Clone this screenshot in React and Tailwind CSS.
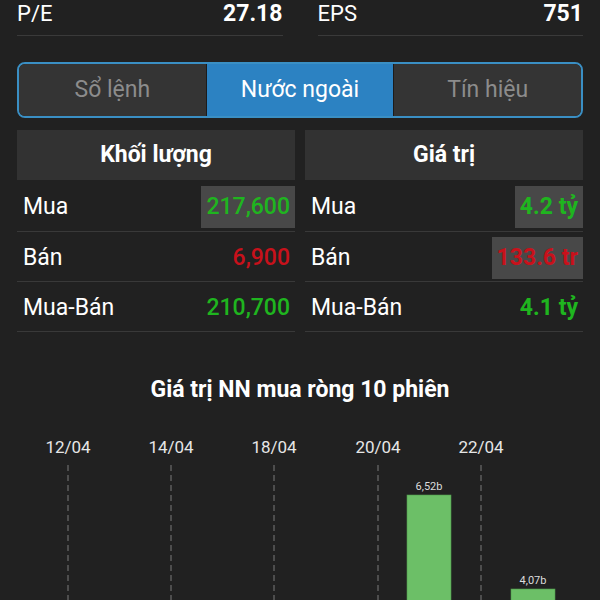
import React from "react";

const rows = [
  { label: "Mua", left: "217,600", lc: "text-[#1fb51f]", lbox: true, right: "4.2 tỷ", rc: "text-[#1fb51f]", rbox: true },
  { label: "Bán", left: "6,900", lc: "text-[#c8111b]", lbox: false, right: "133.6 tr", rc: "text-[#c8111b]", rbox: true },
  { label: "Mua-Bán", left: "210,700", lc: "text-[#1fb51f]", lbox: false, right: "4.1 tỷ", rc: "text-[#1fb51f]", rbox: false },
];

function Panel({ title, side }) {
  return (
    <div className="flex flex-col">
      <div className="h-[50px] bg-[#323232] flex items-center justify-center text-[23px] font-bold text-white">
        {title}
      </div>
      {rows.map((r, i) => {
        const v = side === "l" ? r.left : r.right;
        const c = side === "l" ? r.lc : r.rc;
        const box = side === "l" ? r.lbox : r.rbox;
        return (
          <div
            key={r.label}
            className={
              (i === 0 ? "h-[52px] " : "h-[50px] ") +
              "border-b border-[#393939] flex items-center justify-between pl-[6px] pt-[3px]"
            }
          >
            <span className="text-[23px] text-white">{r.label}</span>
            <span
              className={
                "h-[42px] flex items-center px-[5px] text-[23px] " +
                (side === "r" ? "font-bold " : "font-medium ") +
                c +
                (box ? " bg-[#484848]" : "")
              }
            >
              {v}
            </span>
          </div>
        );
      })}
    </div>
  );
}

function Chart() {
  const lines = [
    { x: 68, d: "12/04" },
    { x: 171, d: "14/04" },
    { x: 274, d: "18/04" },
    { x: 378, d: "20/04" },
    { x: 481, d: "22/04" },
  ];
  const bars = [
    { cx: 429, top: 64, label: "6,52b" },
    { cx: 533, top: 158, label: "4,07b" },
  ];
  return (
    <svg width="600" height="170" className="block" style={{ fontFamily: "Roboto, sans-serif" }}>
      {lines.map((l) => (
        <g key={l.d}>
          <text x={l.x} y={22} textAnchor="middle" fill="#e6e6e6" fontSize="17">
            {l.d}
          </text>
          <line x1={l.x} y1={34} x2={l.x} y2={170} stroke="#7a7a7a" strokeWidth="1" strokeDasharray="6 4" />
        </g>
      ))}
      {bars.map((b) => (
        <g key={b.label}>
          <text x={b.cx} y={b.top - 5} textAnchor="middle" fill="#dcdcdc" fontSize="11">
            {b.label}
          </text>
          <rect x={b.cx - 22} y={b.top} width="44" height={170 - b.top} fill="#6cbf67" stroke="#4f9a4b" strokeWidth="0.6" />
        </g>
      ))}
    </svg>
  );
}

export default function App() {
  return (
    <div className="w-[600px] h-[600px] overflow-hidden bg-[#212121] font-['Roboto',sans-serif]">
      <div className="grid grid-cols-2 gap-[35px] px-[17px]">
        <div className="h-[36px] border-b border-[#3a3a3a] flex justify-between items-start pt-[1px] text-[22px] leading-[26px] text-white">
          <span>P/E</span>
          <span className="font-bold text-[23px] leading-[26px]">27.18</span>
        </div>
        <div className="h-[36px] border-b border-[#3a3a3a] flex justify-between items-start pt-[1px] text-[22px] leading-[26px] text-white">
          <span>EPS</span>
          <span className="font-bold text-[23px] leading-[26px]">751</span>
        </div>
      </div>

      <div className="mx-[17px] mt-[26px] h-[56px] rounded-[8px] border-2 border-[#3a8fc4] overflow-hidden flex text-[23px]">
        <div className="flex-1 bg-[#343434] flex items-center justify-center pt-[1px] text-[#8c8c8c]">Sổ lệnh</div>
        <div className="flex-1 bg-[#2c82c2] flex items-center justify-center pt-[1px] text-white border-l border-[#1c1c1c]">Nước ngoài</div>
        <div className="flex-1 bg-[#343434] flex items-center justify-center pt-[1px] text-[#8c8c8c] border-l border-[#1c1c1c]">Tín hiệu</div>
      </div>

      <div className="grid grid-cols-2 gap-[10px] mx-[17px] mt-[12px]">
        <Panel title="Khối lượng" side="l" />
        <Panel title="Giá trị" side="r" />
      </div>

      <div className="mt-[44px] text-center text-[23px] font-bold text-white leading-[28px]">
        Giá trị NN mua ròng 10 phiên
      </div>

      <div className="mt-[27px]">
        <Chart />
      </div>
    </div>
  );
}
